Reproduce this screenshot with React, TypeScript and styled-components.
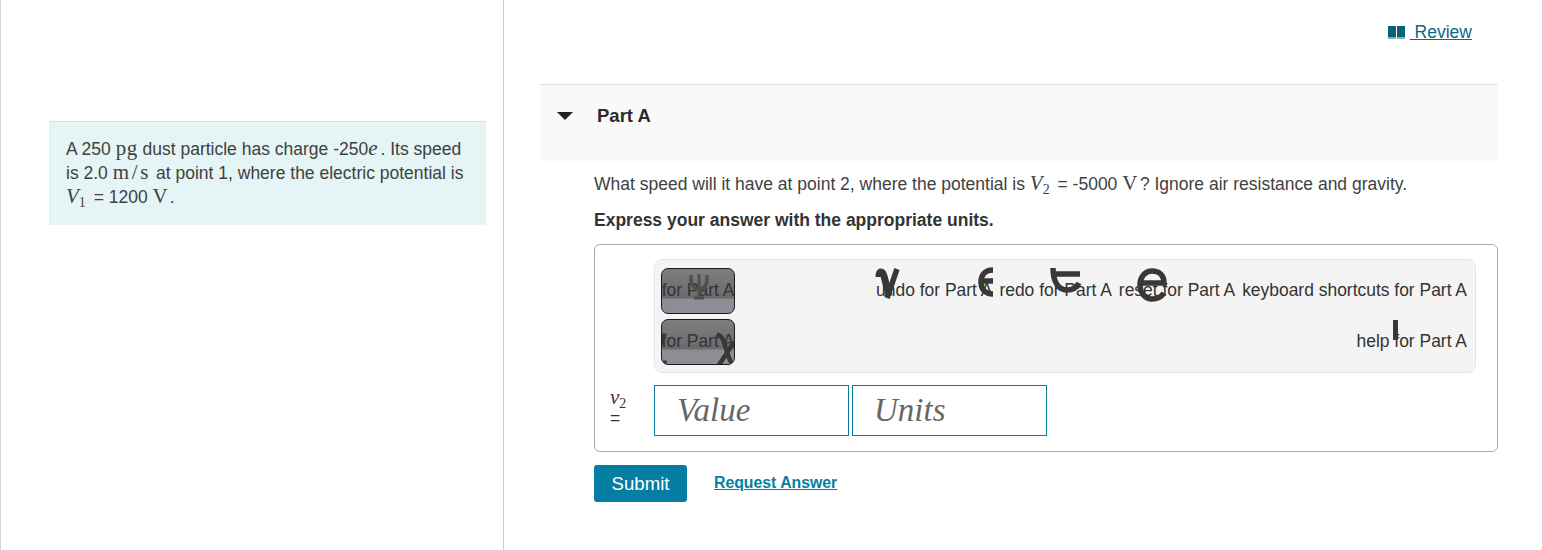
import { ReactNode } from "react";
import styled, { createGlobalStyle } from "styled-components";

const GlobalStyle = createGlobalStyle`
  html, body {
    margin: 0;
    padding: 0;
    background: #fff;
  }
  body {
    font-family: "Liberation Sans", Arial, sans-serif;
    color: #333;
    overflow: hidden;
  }
`;

const Page = styled.div`
  display: flex;
  width: 1542px;
  height: 550px;
  overflow: hidden;
`;

const Sidebar = styled.aside`
  box-sizing: border-box;
  width: 504px;
  height: 550px;
  flex: none;
  padding: 121px 17px 0 48px;
  border-left: 1px solid #d4d4d4;
  border-right: 1px solid #ccc;
`;

const Intro = styled.div`
  box-sizing: border-box;
  height: 104px;
  padding: 15px 17px 0;
  background: #e5f5f5;
  border-top: 1px solid #dcdcdc;
  font-size: 17.5px;
  line-height: 24px;
  color: #414141;
`;

const Main = styled.main`
  box-sizing: border-box;
  width: 1038px;
  flex: none;
  padding: 0 44px 0 36px;
`;

const ReviewRow = styled.div`
  display: flex;
  justify-content: flex-end;
  height: 84px;
  padding: 22px 26px 0 0;
  box-sizing: border-box;
`;

const ReviewLink = styled.a`
  display: flex;
  align-items: center;
  height: 21px;
  font-size: 17.5px;
  color: #0b6a85;
  text-decoration: underline;
  white-space: pre;
`;

const BookIcon = styled.svg`
  width: 17px;
  height: 13px;
  margin-right: 5px;
`;

const PartHeader = styled.div`
  display: flex;
  box-sizing: border-box;
  height: 77px;
  padding: 19px 0 0 17px;
  background: #f9f9f9;
  border-top: 1px solid #e2e2e2;
`;

const Caret = styled.span`
  width: 0;
  height: 0;
  margin: 8px 24px 0 0;
  border-left: 8px solid transparent;
  border-right: 8px solid transparent;
  border-top: 8px solid #222;
`;

const PartTitle = styled.h2`
  margin: 0;
  font-size: 18.5px;
  line-height: 23px;
  font-weight: 700;
  color: #2b2b2b;
`;

const Body = styled.div`
  padding: 10px 0 0 54px;
`;

const Question = styled.p`
  margin: 0;
  height: 26px;
  font-size: 17.5px;
  line-height: 26px;
  color: #414141;
  white-space: nowrap;
`;

const Instruction = styled.p`
  margin: 11px 0 0;
  height: 24px;
  font-size: 17.5px;
  line-height: 24px;
  font-weight: 700;
  color: #333;
`;

const AnswerBox = styled.div`
  box-sizing: border-box;
  height: 208px;
  margin-top: 12px;
  padding: 14px 21px 0 59px;
  border: 1px solid #aaa;
  border-radius: 6px;
`;

const Toolbar = styled.div`
  box-sizing: border-box;
  display: grid;
  grid-template-columns: auto 1fr;
  grid-template-rows: 46px 46px;
  row-gap: 5px;
  height: 114px;
  padding: 8px 8px 0 6px;
  background: #f4f4f4;
  border: 1px solid #e4e4e4;
  border-radius: 8px;
  font-size: 17.45px;
  color: #333;
`;

const TemplateButton = styled.div`
  position: relative;
  box-sizing: border-box;
  width: 74px;
  height: 46px;
  display: flex;
  align-items: center;
  justify-content: center;
  padding-bottom: 1px;
  border: 1px solid #1c1c1c;
  border-radius: 7px;
  overflow: hidden;
  white-space: nowrap;
  background: linear-gradient(#7e7e82 0, #6a6a6a 29px, #8e8d95 30px, #8e8d95 100%);
`;

const ToolGroup = styled.div`
  display: flex;
  justify-content: flex-end;
  align-items: center;
  padding-bottom: 1px;
  gap: 7px;
  white-space: nowrap;
`;

const ToolLabel = styled.span`
  position: relative;
`;

const Glyph = styled.svg<{ $left: number; $top: number }>`
  position: absolute;
  left: ${(p) => p.$left}px;
  top: ${(p) => p.$top}px;
  overflow: visible;
  pointer-events: none;
`;

const EntryRow = styled.div`
  display: flex;
  align-items: flex-start;
  margin-top: 12px;
`;

const EntryLabel = styled.div`
  box-sizing: border-box;
  width: 59px;
  margin-left: -59px;
  padding: 2px 0 0 15px;
  line-height: 20px;
  font-size: 17.5px;
  color: #333;
`;

const MathVar = styled.i<{ $spread?: number }>`
  font-family: "Liberation Serif", "Times New Roman", serif;
  font-size: 1.2em;
  line-height: 1;
  letter-spacing: ${(p) => p.$spread ?? 0}px;
`;

const MathRoman = styled.span<{ $spread?: number }>`
  font-family: "Liberation Serif", "Times New Roman", serif;
  font-size: 1.2em;
  line-height: 1;
  letter-spacing: ${(p) => p.$spread ?? 0}px;
`;

const Sub = styled.sub`
  font-family: "Liberation Serif", "Times New Roman", serif;
  font-size: 0.8em;
  line-height: 0;
  vertical-align: -0.25em;
  margin-right: 3px;
`;

const EntryField = styled.div<{ $pad: number }>`
  box-sizing: border-box;
  width: 195px;
  height: 51px;
  margin-right: 3px;
  padding: 4px 0 0 ${(p) => p.$pad}px;
  border: 1px solid #0b7a9e;
  font-family: "Liberation Serif", "Times New Roman", serif;
  font-style: italic;
  font-size: 33px;
  line-height: 40px;
  color: #666;
`;

const Actions = styled.div`
  display: flex;
  align-items: center;
  margin-top: 13px;
`;

const SubmitButton = styled.button`
  width: 93px;
  height: 37px;
  padding: 0;
  border: none;
  border-radius: 3px;
  background: #047fa3;
  color: #fff;
  font-family: "Liberation Sans", Arial, sans-serif;
  font-size: 18.6px;
  font-weight: 400;
`;

const AnswerLink = styled.a`
  margin: 0 0 2px 27px;
  font-size: 15.8px;
  font-weight: 700;
  color: #047fa3;
  text-decoration: underline;
`;

// broken icon-font glyphs that sit over the toolbar labels
const StrokeGlyph = ({
  left,
  top,
  w,
  h,
  color = "#383838",
  children,
}: {
  left: number;
  top: number;
  w: number;
  h: number;
  color?: string;
  children: ReactNode;
}) => (
  <Glyph
    $left={left}
    $top={top}
    width={w}
    height={h}
    viewBox={`0 0 ${w} ${h}`}
    fill="none"
    stroke={color}
    aria-hidden="true"
  >
    {children}
  </Glyph>
);

const App = () => {
  return (
    <Page>
      <GlobalStyle />
      <Sidebar>
        <Intro>
          A 250 <MathRoman $spread={0.5}>pg</MathRoman> dust particle has charge
          -250<MathVar $spread={3}>e</MathVar>. Its speed is 2.0{" "}
          <MathRoman $spread={2.7}>m/s</MathRoman> at point 1, where the
          electric potential is <MathVar>V</MathVar>
          <Sub>1</Sub> = 1200 <MathRoman $spread={2}>V</MathRoman>.
        </Intro>
      </Sidebar>
      <Main>
        <ReviewRow>
          <ReviewLink href="#">
            <BookIcon viewBox="0 0 17 13" aria-hidden="true">
              <path d="M0 0h8v11H0zM9 0h8v11H9z" fill="#0b5f78" />
              <path d="M0 11h8v2H0zM9 11h8v2H9z" fill="#7fb0bf" />
            </BookIcon>
            {" Review"}
          </ReviewLink>
        </ReviewRow>
        <PartHeader>
          <Caret />
          <PartTitle>Part A</PartTitle>
        </PartHeader>
        <Body>
          <Question>
            What speed will it have at point 2, where the potential is{" "}
            <MathVar>V</MathVar>
            <Sub>2</Sub> = -5000 <MathRoman $spread={2.5}>V</MathRoman>? Ignore
            air resistance and gravity.
          </Question>
          <Instruction>Express your answer with the appropriate units.</Instruction>
          <AnswerBox>
            <Toolbar>
              <TemplateButton>
                for Part A
                <StrokeGlyph left={26} top={5} w={22} h={25} color="#505052">
                  <path d="M3 1c0 9 1 14 8 14s8-5 8-14" strokeWidth="3.5" />
                  <path d="M11 0v24M6 24h10" strokeWidth="3" />
                </StrokeGlyph>
              </TemplateButton>
              <ToolGroup>
                <ToolLabel>
                  undo for Part A
                  <StrokeGlyph left={0} top={-12} w={24} h={32}>
                    <path d="M3 9c0-6 3-7 5-1l5 20" strokeWidth="7" />
                    <path d="M11 30 21 1" strokeWidth="5.5" />
                  </StrokeGlyph>
                  <StrokeGlyph left={102} top={-13} w={16} h={30}>
                    <path d="M15 3C7 3 3 8 3 15s4 12 12 12M3 14h12" strokeWidth="5.5" />
                  </StrokeGlyph>
                </ToolLabel>
                <ToolLabel>
                  redo for Part A
                  <StrokeGlyph left={51} top={-12} w={31} h={26}>
                    <path d="M3 0c0 13 5 22 14 22 6 0 10-3 12-7M1 6h29" strokeWidth="5.5" />
                  </StrokeGlyph>
                </ToolLabel>
                <ToolLabel>
                  reset for Part A
                  <StrokeGlyph left={18} top={-12} w={30} h={33}>
                    <path d="M3 15h24C27 7 22 3 15 3S3 9 3 17s5 14 12 14 10-3 12-6" strokeWidth="5.5" />
                  </StrokeGlyph>
                </ToolLabel>
                <span>keyboard shortcuts for Part A</span>
              </ToolGroup>
              <TemplateButton>
                for Part A
                <StrokeGlyph left={-1} top={14} w={6} h={11}>
                  <path d="M1 1h4M2 1v10" strokeWidth="3" />
                </StrokeGlyph>
                <StrokeGlyph left={1} top={40} w={6} h={4}>
                  <path d="M0 2h4" strokeWidth="3" />
                </StrokeGlyph>
                <StrokeGlyph left={54} top={14} w={20} h={31}>
                  <path d="M1 1c6 0 7 8 10 17s4 12 8 12M18 8 3 31" strokeWidth="4.5" />
                </StrokeGlyph>
              </TemplateButton>
              <ToolGroup>
                <ToolLabel>
                  help for Part A
                  <StrokeGlyph left={36} top={-11} w={5} h={20}>
                    <path d="M2.5 0v20" strokeWidth="5" />
                  </StrokeGlyph>
                </ToolLabel>
              </ToolGroup>
            </Toolbar>
            <EntryRow>
              <EntryLabel>
                <MathVar>v</MathVar>
                <Sub>2</Sub>
                <br />=
              </EntryLabel>
              <EntryField $pad={22}>Value</EntryField>
              <EntryField $pad={21}>Units</EntryField>
            </EntryRow>
          </AnswerBox>
          <Actions>
            <SubmitButton>Submit</SubmitButton>
            <AnswerLink href="#">Request Answer</AnswerLink>
          </Actions>
        </Body>
      </Main>
    </Page>
  );
};

export default App;
